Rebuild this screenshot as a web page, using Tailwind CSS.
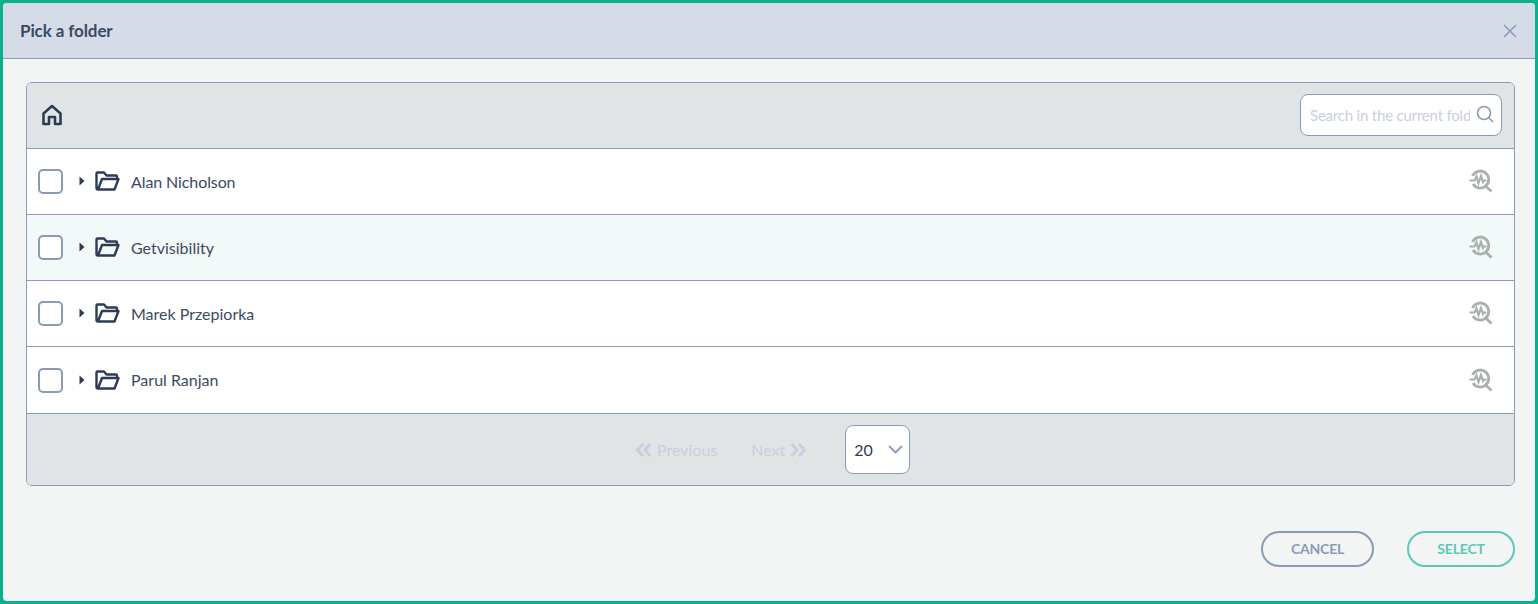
<!DOCTYPE html>
<html lang="en">
  <head>
    <meta charset="UTF-8" />
    <title>Pick a folder</title>
    <script src="https://cdn.jsdelivr.net/npm/@tailwindcss/browser@4"></script>
  </head>
  <body class="h-[604px] w-[1538px] overflow-hidden bg-[#0bb08f] font-['Lato',sans-serif] text-[#2d3b55]">
    <div class="m-[3px] flex h-[598px] w-[1532px] flex-col overflow-hidden rounded-[4px] bg-[#f3f5f5]">

      <!-- Header -->
      <header class="flex h-[56px] shrink-0 items-center justify-between border-b border-[#8a9bb8] bg-[#d5dce7] pl-[17px] pr-[18px]">
        <h1 class="text-[17px] font-bold tracking-[-0.1px] text-[#3a4a63]">Pick a folder</h1>
        <svg class="h-[14px] w-[14px]" viewBox="0 0 14 14" fill="none" stroke="#8a9bb8" stroke-width="1.6"><path d="M1 1l12 12M13 1L1 13" /></svg>
      </header>

      <!-- Folder table -->
      <section class="ml-[23px] mt-[23px] w-[1489px] overflow-hidden rounded-[6px] border border-[#8a9bb8]">
        <div class="flex h-[66px] items-center justify-between border-b border-[#8a9bb8] bg-[#e0e4e5] pl-[13px] pr-[12px]">
          <svg class="mb-[1px] h-[24px] w-[24px]" viewBox="0 0 24 24" fill="none" stroke="#2d3b55" stroke-width="2.6" stroke-linejoin="round"><path d="M3.500 10.500L12 3l8.500 7.500V21H15v-7H9v7H3.500z" /></svg>
          <div class="mb-[1px] flex h-[42px] w-[202px] items-center rounded-[8px] border border-[#8a9bb8] bg-white pl-[9px] pr-[7px]">
            <span class="w-[160px] overflow-hidden whitespace-nowrap text-[15px] tracking-[-0.2px] text-[#c9cfdf]">Search in the current folder</span>
            <svg class="mb-[2px] ml-auto h-[18px] w-[18px]" viewBox="0 0 18 18" fill="none" stroke="#8a9bb8" stroke-width="1.600"><circle cx="8" cy="8" r="6.500" /><path d="M12.800 12.800L17 17" /></svg>
          </div>
        </div>

        <div class="flex h-[66px] items-center border-b border-[#8a9bb8] bg-white pl-[11px] pr-[21px]">
          <span class="h-[25px] w-[25px] rounded-[5px] border-2 border-[#8a9bb8] bg-white"></span>
          <svg class="ml-[16px] mb-[2px] h-[10px] w-[6px]" viewBox="0 0 6 10" fill="#2d3b55"><path d="M0.500 0.500L5.500 5 0.500 9.500z" /></svg>
          <svg class="mb-[1px] ml-[10px] h-[20px] w-[25px]" viewBox="0 0 25 20" fill="none" stroke="#2d3b55" stroke-width="2.400" stroke-linejoin="round"><path d="M3 18.500c-1 0-1.500-.5-1.500-1.500V2.500c0-.6.400-1 1-1H9l2.500 3H21c.6 0 1 .4 1 1V8M3 18.500h16.500l4-10.500H7L3 18.500z" /></svg>
          <span class="ml-[11px] text-[16px] tracking-[-0.1px] text-[#3a4a63]">Alan Nicholson</span>
          <svg class="ml-auto mb-[2px] h-[24px] w-[24px]" viewBox="0 0 24 24" fill="none" stroke="#a9b0ae" stroke-width="2.800"><path d="M3.500 7A8.500 8.500 0 1 1 4 15M15.500 16L22.500 22.500" /><path stroke-width="2.200" d="M0.500 11.500H5.500l2-4 2 6.500 2.500-7 2 6 1-1.500h2.500" /></svg>
        </div>

        <div class="flex h-[66px] items-center border-b border-[#8a9bb8] bg-[#f3f8f8] pl-[11px] pr-[21px]">
          <span class="h-[25px] w-[25px] rounded-[5px] border-2 border-[#8a9bb8] bg-white"></span>
          <svg class="ml-[16px] mb-[2px] h-[10px] w-[6px]" viewBox="0 0 6 10" fill="#2d3b55"><path d="M0.500 0.500L5.500 5 0.500 9.500z" /></svg>
          <svg class="mb-[1px] ml-[10px] h-[20px] w-[25px]" viewBox="0 0 25 20" fill="none" stroke="#2d3b55" stroke-width="2.400" stroke-linejoin="round"><path d="M3 18.500c-1 0-1.500-.5-1.500-1.500V2.500c0-.6.400-1 1-1H9l2.500 3H21c.6 0 1 .4 1 1V8M3 18.500h16.500l4-10.500H7L3 18.500z" /></svg>
          <span class="ml-[11px] text-[16px] text-[#3a4a63]">Getvisibility</span>
          <svg class="ml-auto mb-[2px] h-[24px] w-[24px]" viewBox="0 0 24 24" fill="none" stroke="#a9b0ae" stroke-width="2.800"><path d="M3.500 7A8.500 8.500 0 1 1 4 15M15.500 16L22.500 22.500" /><path stroke-width="2.200" d="M0.500 11.500H5.500l2-4 2 6.500 2.500-7 2 6 1-1.500h2.500" /></svg>
        </div>

        <div class="flex h-[66px] items-center border-b border-[#8a9bb8] bg-white pl-[11px] pr-[21px]">
          <span class="h-[25px] w-[25px] rounded-[5px] border-2 border-[#8a9bb8] bg-white"></span>
          <svg class="ml-[16px] mb-[2px] h-[10px] w-[6px]" viewBox="0 0 6 10" fill="#2d3b55"><path d="M0.500 0.500L5.500 5 0.500 9.500z" /></svg>
          <svg class="mb-[1px] ml-[10px] h-[20px] w-[25px]" viewBox="0 0 25 20" fill="none" stroke="#2d3b55" stroke-width="2.400" stroke-linejoin="round"><path d="M3 18.500c-1 0-1.500-.5-1.500-1.500V2.500c0-.6.400-1 1-1H9l2.500 3H21c.6 0 1 .4 1 1V8M3 18.500h16.500l4-10.500H7L3 18.500z" /></svg>
          <span class="ml-[11px] text-[16px] text-[#3a4a63]">Marek Przepiorka</span>
          <svg class="ml-auto mb-[2px] h-[24px] w-[24px]" viewBox="0 0 24 24" fill="none" stroke="#a9b0ae" stroke-width="2.800"><path d="M3.500 7A8.500 8.500 0 1 1 4 15M15.500 16L22.500 22.500" /><path stroke-width="2.200" d="M0.500 11.500H5.500l2-4 2 6.500 2.500-7 2 6 1-1.500h2.500" /></svg>
        </div>

        <div class="flex h-[67px] items-center border-b border-[#8a9bb8] bg-white pl-[11px] pr-[21px]">
          <span class="h-[25px] w-[25px] rounded-[5px] border-2 border-[#8a9bb8] bg-white"></span>
          <svg class="ml-[16px] mb-[1px] h-[10px] w-[6px]" viewBox="0 0 6 10" fill="#2d3b55"><path d="M0.500 0.500L5.500 5 0.500 9.500z" /></svg>
          <svg class="ml-[10px] h-[20px] w-[25px]" viewBox="0 0 25 20" fill="none" stroke="#2d3b55" stroke-width="2.400" stroke-linejoin="round"><path d="M3 18.500c-1 0-1.500-.5-1.500-1.500V2.500c0-.6.400-1 1-1H9l2.500 3H21c.6 0 1 .4 1 1V8M3 18.500h16.500l4-10.500H7L3 18.500z" /></svg>
          <span class="ml-[11px] text-[16px] text-[#3a4a63]">Parul Ranjan</span>
          <svg class="ml-auto mb-[1px] h-[24px] w-[24px]" viewBox="0 0 24 24" fill="none" stroke="#a9b0ae" stroke-width="2.800"><path d="M3.500 7A8.500 8.500 0 1 1 4 15M15.500 16L22.500 22.500" /><path stroke-width="2.200" d="M0.500 11.500H5.500l2-4 2 6.500 2.500-7 2 6 1-1.500h2.500" /></svg>
        </div>

        <!-- Pagination -->
        <div class="flex h-[71px] items-center bg-[#e0e4e5] pl-[608px] text-[16px] text-[#c9cfdf]">
          <svg class="h-[14px] w-[17px]" viewBox="0 0 17 14" fill="none" stroke="#c9cfdf" stroke-width="3"><path d="M8 1L2.500 7 8 13M15.500 1L10 7l5.500 6" /></svg>
          <span class="ml-[5px]">Previous</span>
          <span class="ml-[34px]">Next</span>
          <svg class="ml-[5px] h-[14px] w-[17px]" viewBox="0 0 17 14" fill="none" stroke="#c9cfdf" stroke-width="3"><path d="M1.500 1L7 7l-5.500 6M9 1l5.500 6L9 13" /></svg>
          <div class="ml-[38px] flex h-[49px] w-[65px] items-center justify-between rounded-[8px] border border-[#8a9bb8] bg-white pl-[8px] pr-[6px] text-[#2d3b55]">
            <span>20</span>
            <svg class="h-[9px] w-[15px]" viewBox="0 0 15 9" fill="none" stroke="#8a9bb8" stroke-width="1.800"><path d="M1 1l6.500 6.500L14 1" /></svg>
          </div>
        </div>
      </section>

      <!-- Actions -->
      <footer class="mr-[20px] mt-[45px] flex justify-end gap-[33px]">
        <button class="flex h-[36px] w-[113px] items-center justify-center rounded-full border-2 border-[#8a9bb8] pb-[2px] text-[14px] font-bold tracking-[-0.2px] text-[#8a9bb8]">CANCEL</button>
        <button class="flex h-[36px] w-[108px] items-center justify-center rounded-full border-2 border-[#5cc8b5] pb-[2px] text-[14px] font-bold tracking-[-0.2px] text-[#5cc8b5]">SELECT</button>
      </footer>
    </div>
  </body>
</html>
